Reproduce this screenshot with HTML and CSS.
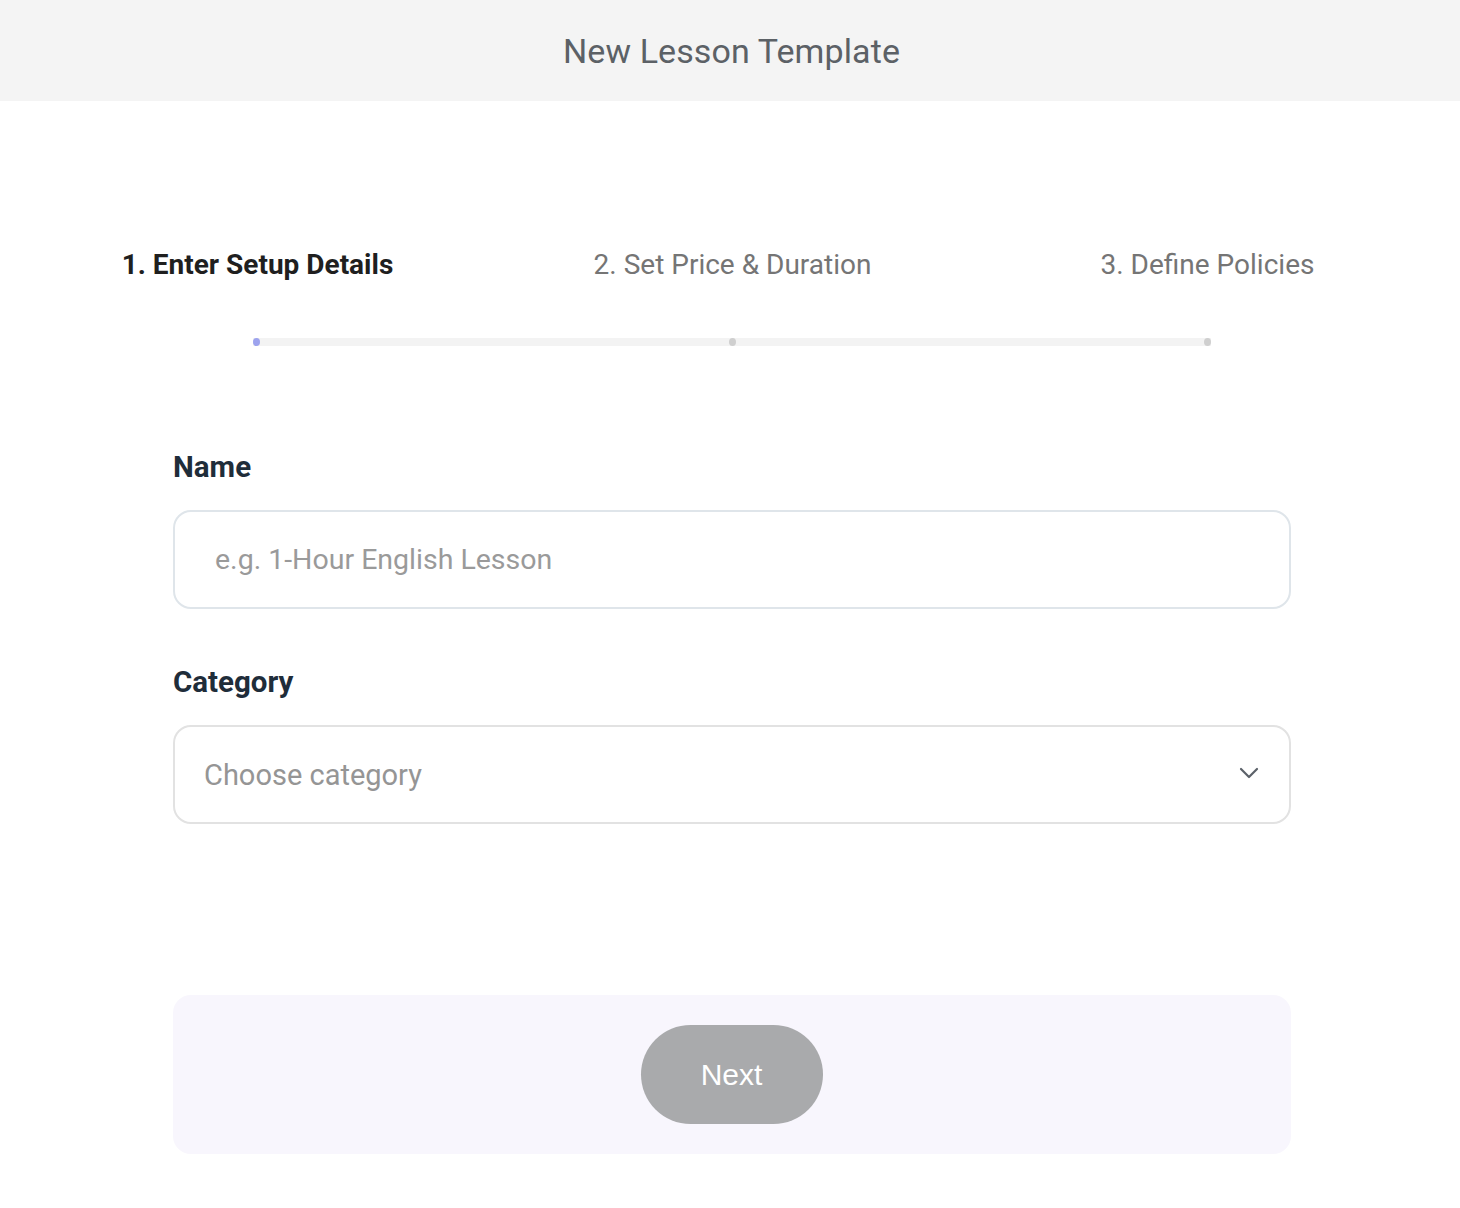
FILE: index.html
```html
<!DOCTYPE html>
<html lang="en">
<head>
<meta charset="utf-8">
<title>New Lesson Template</title>
<link rel="stylesheet" href="styles.css">
</head>
<body>
<header class="topbar"><h1 class="title">New Lesson Template</h1></header>
<main class="page">
  <div class="steps">
    <div class="step active">1. Enter Setup Details</div>
    <div class="step">2. Set Price &amp; Duration</div>
    <div class="step">3. Define Policies</div>
  </div>
  <div class="progress">
    <div class="track">
      <span class="dot dot-active"></span>
      <span class="dot"></span>
      <span class="dot"></span>
    </div>
  </div>
  <form class="form">
    <label class="label" for="name">Name</label>
    <input class="field name-field" id="name" type="text" placeholder="e.g. 1-Hour English Lesson">
    <label class="label label-cat" for="cat">Category</label>
    <div class="field select-field" id="cat">
      <span class="select-ph">Choose category</span>
      <svg class="chev" width="20" height="12" viewBox="0 0 20 12"><path d="M2 2 L10 10 L18 2" fill="none" stroke="#5b6169" stroke-width="2.2" stroke-linecap="round" stroke-linejoin="round"/></svg>
    </div>
    <div class="footer-box">
      <button type="button" class="next-btn">Next</button>
    </div>
  </form>
</main>
</body>
</html>
```

FILE: styles.css
```css
* { box-sizing: border-box; }
html, body { margin: 0; padding: 0; background: #fff; }
body { font-family: Roboto, "Liberation Sans", sans-serif; }

.topbar {
  height: 101px;
  background: #f4f4f4;
  display: flex;
  align-items: center;
  justify-content: center;
}
.title {
  margin: 0;
  font-weight: 400;
  font-size: 34px;
  color: #5c6166;
  letter-spacing: 0.1px;
  padding-left: 3px;
}

.page { padding: 0 15px 0 20px; }

.steps {
  display: grid;
  grid-template-columns: repeat(3, 475px);
  margin-top: 145px;
  height: 36px;
  align-items: center;
}
.step {
  text-align: center;
  font-size: 28px;
  color: #757575;
  white-space: nowrap;
}
.step.active { color: #1f1f1f; font-weight: 700; }

.progress {
  margin-top: 56px;
  padding: 0 234px 0 233px;
}
.track {
  height: 8px;
  background: #f3f3f3;
  display: flex;
  justify-content: space-between;
  align-items: center;
}
.dot {
  width: 7px;
  height: 8px;
  border-radius: 50%;
  background: #cfcfcf;
}
.dot-active { background: #9da3ee; }

.form {
  width: 1118px;
  margin: 103px auto 0 153px;
  display: flex;
  flex-direction: column;
}
.label {
  font-size: 29.5px;
  font-weight: 700;
  color: #1f2d3a;
  line-height: 36px;
}
.field {
  margin-top: 25px;
  height: 99px;
  border: 2px solid #dfe5ea;
  border-radius: 18px;
  background: #fff;
  font-family: Roboto, "Liberation Sans", sans-serif;
  font-size: 28.5px;
  color: #333;
}
.name-field {
  padding: 0 40px;
  outline: none;
  width: 100%;
}
.name-field::placeholder { color: #9a9a9a; }
.label-cat { margin-top: 55px; }
.select-field {
  border-color: #e2e2e2;
  display: flex;
  align-items: center;
  justify-content: space-between;
  padding: 0 30px 0 29px;
  font-size: 29px;
}
.select-ph { color: #959595; }
.chev { margin-top: -4px; }

.footer-box {
  margin-top: 171px;
  height: 159px;
  background: #f8f6fd;
  border-radius: 18px;
  display: flex;
  align-items: center;
  justify-content: center;
}
.next-btn {
  width: 182px;
  height: 99px;
  border: none;
  border-radius: 50px;
  background: #a9aaac;
  color: #fff;
  font-family: "Liberation Sans", Arial, sans-serif;
  font-size: 30px;
  margin-left: -1px;
}
```
